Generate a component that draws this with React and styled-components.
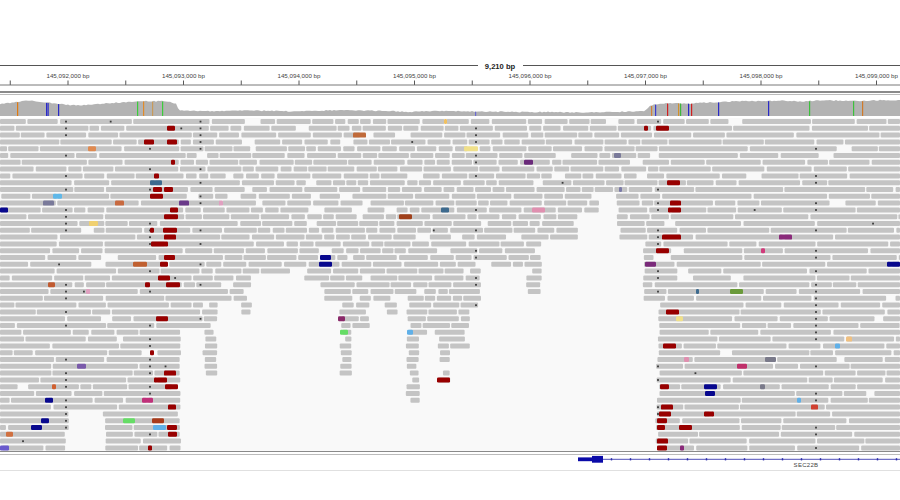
import React, { useMemo } from 'react';
import styled, { createGlobalStyle } from 'styled-components';

const W = 900;

const GlobalStyle = createGlobalStyle`
  html, body { margin: 0; padding: 0; background: #ffffff; }
  body { font-family: "Liberation Sans", Arial, sans-serif; }
`;

const Frame = styled.div`
  width: 900px;
  height: 500px;
  overflow: hidden;
  background: #ffffff;
  display: flex;
  flex-direction: column;
`;

const TopBlank = styled.div`
  flex: none;
  height: 58px;
`;

const TrackSvg = styled.svg`
  display: block;
  flex: none;
  width: 900px;
  height: ${(p) => p.$h}px;
  background: ${(p) => p.$bg || 'transparent'};
`;

const Divider = styled.div`
  flex: none;
  height: 4px;
  box-sizing: border-box;
  border-top: ${(p) => p.$top}px solid #8a8a8a;
  border-bottom: 1px solid #bbbbbb;
`;

const BottomRule = styled.div`
  flex: none;
  height: 1px;
  background: #e0e0e0;
`;

const SpanLabel = styled.text`
  font-family: "Liberation Sans", Arial, sans-serif;
  font-size: 7.6px;
  font-weight: 700;
  fill: #222;
`;

const TickLabel = styled.text`
  font-family: "Liberation Sans", Arial, sans-serif;
  font-size: 6.2px;
  fill: #444;
`;

const GeneLabel = styled.text`
  font-family: "Liberation Sans", Arial, sans-serif;
  font-size: 6px;
  letter-spacing: 0.3px;
  fill: #444;
`;

/* ---------- deterministic random ---------- */
function mulberry32(a) {
  return function () {
    a |= 0;
    a = (a + 0x6d2b79f5) | 0;
    let t = Math.imul(a ^ (a >>> 15), 1 | a);
    t = (t + Math.imul(t ^ (t >>> 7), 61 | t)) ^ t;
    return ((t ^ (t >>> 14)) >>> 0) / 4294967296;
  };
}

/* ---------- ruler ---------- */
const MAJOR0 = 68;
const STEP = 115.5;

function Ruler() {
  const majors = Array.from({ length: 8 }, (_, k) => MAJOR0 + STEP * k);
  const minors = Array.from({ length: 8 }, (_, k) => MAJOR0 - STEP / 2 + STEP * k);
  return (
    <TrackSvg $h={33} viewBox="0 0 900 33">
      <line x1="0" y1="7.5" x2="478" y2="7.5" stroke="#555" strokeWidth="1" />
      <line x1="523" y1="7.5" x2="900" y2="7.5" stroke="#555" strokeWidth="1" />
      <SpanLabel x="500" y="10.6" textAnchor="middle">9,210 bp</SpanLabel>
      {majors.map((x, k) => (
        <g key={'M' + k}>
          <TickLabel x={x} y="20.4" textAnchor="middle">
            {`145,0${92 + k},000 bp`}
          </TickLabel>
          <line x1={x} y1="22.5" x2={x} y2="27" stroke="#444" strokeWidth="0.9" />
        </g>
      ))}
      {minors.map((x, k) => (
        <line key={'m' + k} x1={x} y1="22.5" x2={x} y2="27" stroke="#444" strokeWidth="0.9" />
      ))}
      <line x1="0" y1="27" x2="900" y2="27" stroke="#6a6a6a" strokeWidth="0.9" />
    </TrackSvg>
  );
}

/* ---------- coverage ---------- */
const COV_PTS = [
  [0, 104], [10, 103], [20, 101.5], [30, 100.5], [40, 102], [50, 103], [60, 104],
  [70, 105], [80, 105.5], [90, 104.5], [100, 104], [110, 103], [120, 102.5], [130, 102],
  [140, 101], [150, 101.5], [160, 101], [170, 102], [176, 104], [179, 110], [190, 111],
  [220, 111], [250, 110.5], [280, 111], [300, 111.5], [330, 110.3], [360, 110.5],
  [390, 111], [410, 112], [430, 111], [460, 111.2], [490, 111.6], [520, 112], [550, 112],
  [580, 112.5], [610, 112], [630, 111.5], [644, 111], [650, 106], [656, 104], [670, 103],
  [690, 103.5], [700, 103], [720, 102], [740, 101.2], [760, 101], [780, 100.6],
  [800, 101.5], [820, 100.3], [840, 100.6], [860, 101], [880, 100.2], [900, 100],
];

function covTop(x) {
  for (let i = 0; i < COV_PTS.length - 1; i++) {
    const [x0, y0] = COV_PTS[i];
    const [x1, y1] = COV_PTS[i + 1];
    if (x >= x0 && x <= x1) return y0 + ((y1 - y0) * (x - x0)) / (x1 - x0);
  }
  return 101;
}

const COV_BARS = [
  [17, '#e07a10'], [46, '#2a2ac8'], [47.5, '#2a2ac8'], [58, '#2a2ac8'], [137, '#3ccc3c'],
  [143, '#e08a2a'], [152, '#c89a5a'], [162, '#3ccc3c'], [651, '#d0803a'], [655, '#3a3ad0'],
  [667, '#d02020'], [678, '#d0902a'], [680, '#3cb83c'], [688, '#2a2ac8'], [691, '#d02020'],
  [718, '#2a2ac8'], [768, '#2a2ac8'], [809, '#3cc03c'], [853, '#3cc03c'], [862, '#d07a2a'],
  [475, '#6a6ad0'],
];

const COV_Y0 = 95;
const COV_BOTTOM = 21;

function Coverage() {
  const d = useMemo(() => {
    const rnd = mulberry32(17);
    let p = `M0 ${COV_BOTTOM}`;
    for (let x = 0; x <= W; x += 2) {
      const y = covTop(x) - COV_Y0 + (rnd() - 0.5) * 1.0;
      p += ` L${x} ${y.toFixed(2)}`;
    }
    p += ` L${W} ${COV_BOTTOM} Z`;
    return p;
  }, []);
  return (
    <TrackSvg $h={23} viewBox="0 0 900 23">
      <path d={d} fill="#b3b3b3" />
      {COV_BARS.map(([x, c], i) => (
        <rect key={i} x={x} y={covTop(x) - COV_Y0 + 0.3} width="1.2" height={COV_BOTTOM - (covTop(x) - COV_Y0) - 0.3} fill={c} />
      ))}
    </TrackSvg>
  );
}

/* ---------- alignments ---------- */
const PITCH = 6.8;
const READ_H = 5;
const ROWS = 49;
const rowTop = (r) => 1 + PITCH * r;

const DEPTH = [
  [0, 66, 451], [66, 70, 430], [70, 102, 413], [102, 181, 451], [181, 201, 333],
  [201, 218, 377], [218, 238, 306], [238, 252, 319], [252, 300, 274], [300, 320, 282],
  [320, 338, 306], [338, 352, 382], [352, 370, 334], [370, 383, 301], [383, 398, 321],
  [398, 405, 300], [405, 420, 403], [420, 436, 341], [436, 451, 383], [451, 470, 353],
  [470, 481, 311], [481, 525, 271], [525, 542, 296], [542, 578, 246], [578, 600, 216],
  [600, 615, 196], [615, 641, 246], [641, 655, 301], [655, 901, 451],
];

function maxRow(x) {
  let yb = 451;
  for (const [a, b, y] of DEPTH) {
    if (x >= a && x < b) { yb = y; break; }
  }
  return Math.floor((yb - 119 - READ_H) / PITCH + 0.001);
}

function fits(x1, x2, r) {
  const a = Math.max(0, x1);
  const b = Math.min(899, x2);
  for (let x = a; x <= b; x += 2) if (maxRow(x) < r) return false;
  return maxRow(b) >= r;
}

function buildReads() {
  const rnd = mulberry32(20240611);
  const rows = [];
  for (let r = 0; r < ROWS; r++) {
    const list = [];
    let x = -rnd() * 50;
    let guard = 0;
    while (x < W && guard++ < 3000) {
      const xc = Math.max(0, Math.min(899, x + 3));
      if (maxRow(xc) < r) { x += 2; continue; }
      const dense = maxRow(xc) >= 44;
      let L = dense ? 18 + rnd() * 72 : 9 + rnd() * 26;
      if (!fits(x, x + L, r)) {
        // shrink to fit the local column
        while (L > 6 && !fits(x, x + L, r)) L -= 1.5;
        if (L <= 6 || rnd() < 0.12) { x += 3 + rnd() * 4; continue; }
      }
      list.push([x, L]);
      x += L + 1 + rnd() * 1.6;
      if (rnd() < (dense ? 0.05 : 0.1)) x += 3 + rnd() * 12;
    }
    rows.push(list);
  }
  return rows;
}

const R = '#980000';
const B = '#08088e';
const rowOf = (yc) => Math.max(0, Math.min(ROWS - 1, Math.round((yc - 121.5) / PITCH)));

const COLORED = [
  // left red cluster
  [167, 175, 129, R], [144, 154, 143, R], [167, 177, 143, R], [171, 175, 163, R],
  [154, 159, 176, R], [150, 162, 184, '#3d6a8e'], [153, 162, 190, R], [164, 173, 190, R],
  [150, 163, 197, R], [170, 178, 210, R], [164, 178, 217, R], [150, 154, 230, R],
  [163, 177, 230, R], [164, 176, 237, R], [151, 168, 244, R], [164, 175, 258, R],
  [160, 168, 264, R], [133, 147, 265, '#c06030'], [158, 170, 278, R], [166, 180, 285, R],
  [145, 150, 285, R], [156, 168, 319, R], [150, 154, 352, R], [164, 176, 372, R],
  [154, 167, 381, R], [165, 178, 386, R], [142, 153, 399, '#c0307a'], [168, 176, 406, R],
  [123, 135, 419, '#66dd66'], [152, 164, 419, '#a83a1a'], [167, 177, 426, R],
  [153, 166, 426, '#60b0e8'], [168, 177, 432, R], [148, 152, 446, R],
  // left misc
  [88, 96, 150, '#e08a50'], [53, 62, 197, '#60b8e8'], [43, 54, 204, '#7a7a9a'],
  [115, 124, 204, '#c86a40'], [179, 189, 204, '#6a3a8a'], [0, 8, 210, B],
  [89, 98, 224, '#f0d070'], [48, 55, 285, '#c05a30'], [86, 90, 291, '#e0a0c0'],
  [77, 86, 366, '#7a5aaa'], [52, 56, 386, '#d06030'], [45, 53, 399, B],
  [41, 49, 419, B], [31, 42, 426, B], [6, 13, 432, '#d07040'], [0, 9, 448, '#6a5acd'],
  // middle
  [353, 366, 136, '#c06a3a'], [444, 447, 122, '#f0c060'], [464, 478, 150, '#f0e08a'],
  [524, 533, 163, '#6a2a7a'], [441, 449, 211, '#3d6a8e'], [399, 412, 217, '#a0401a'],
  [532, 545, 211, '#e090b0'], [320, 331, 258, B], [319, 332, 265, B],
  [338, 345, 319, '#8a2a6a'], [340, 348, 332, '#66dd66'], [407, 413, 332, '#60b0e8'],
  [437, 450, 379, R], [219, 223, 204, '#e0a0c0'],
  // right cluster
  [644, 648, 129, R], [656, 669, 129, R], [614, 621, 156, '#7a7a9a'], [667, 680, 183, R],
  [619, 622, 190, '#7a7aa8'], [670, 681, 203, R], [668, 681, 210, R], [662, 681, 237, R],
  [779, 792, 237, '#8a2a7a'], [656, 669, 251, R], [761, 765, 251, '#d03a7a'],
  [645, 656, 265, '#7a2a7a'], [887, 900, 265, B], [730, 743, 292, '#6a9a3a'],
  [696, 699, 292, '#3d6a8e'], [666, 679, 312, R], [676, 683, 318, '#f0e08a'],
  [663, 676, 345, R], [835, 840, 345, '#60b0e8'], [846, 852, 339, '#f0c080'],
  [684, 689, 358, '#e090b0'], [765, 776, 358, '#7a7a8a'], [737, 747, 365, '#c0306a'],
  [660, 669, 386, R], [704, 717, 386, B], [760, 765, 386, '#7a7a8a'], [705, 715, 392, B],
  [797, 801, 399, '#60b0e8'], [661, 673, 406, R], [811, 818, 406, '#d04030'],
  [659, 671, 412, R], [704, 714, 412, R], [657, 667, 419, R], [679, 692, 426, R],
  [657, 665, 426, R], [657, 668, 439, R], [657, 667, 446, R], [680, 684, 446, '#8a2a7a'],
];

const SPECK_COLS = [66, 150, 200.5, 476, 658, 816];

function Alignments() {
  const { rows, specks } = useMemo(() => {
    const rows = buildReads();
    const rnd = mulberry32(99);
    const specks = [];
    rows.forEach((list, r) => {
      SPECK_COLS.forEach((cx) => {
        const hit = list.some(([x, L]) => cx > x + 1 && cx < x + L - 1);
        if (hit && rnd() < 0.55) specks.push([cx, r]);
      });
      if (rnd() < 0.3) {
        const cx = 20 + rnd() * 860;
        const hit = list.some(([x, L]) => cx > x + 1 && cx < x + L - 1);
        if (hit) specks.push([cx, r]);
      }
    });
    return { rows, specks };
  }, []);

  return (
    <TrackSvg $h={333} $bg="#f9f9f9" viewBox="0 0 900 333">
      {rows.map((list, r) =>
        list.map(([x, L], i) => {
          const x1 = Math.max(0, x);
          const x2 = Math.min(W, x + L);
          if (x2 - x1 < 1) return null;
          return (
            <rect key={r + '-' + i} x={x1} y={rowTop(r)} width={x2 - x1} height={READ_H} rx="1" fill="#c4c4c4" />
          );
        })
      )}
      {specks.map(([x, r], i) => (
        <rect key={'s' + i} x={x - 0.9} y={rowTop(r) + 1.7} width="1.8" height="1.8" fill="#3a3a3a" />
      ))}
      {COLORED.map(([a, b, yc, c], i) => (
        <rect key={'c' + i} x={a} y={rowTop(rowOf(yc))} width={b - a} height={READ_H} rx="1.2" fill={c} />
      ))}
    </TrackSvg>
  );
}

/* ---------- gene track ---------- */
function GeneTrack() {
  const arrows = [];
  for (let x = 611.5; x < W; x += 19) arrows.push(x);
  return (
    <TrackSvg $h={15} viewBox="0 0 900 15">
      <line x1="578" y1="4.3" x2="900" y2="4.3" stroke="#3a3ab0" strokeWidth="0.9" />
      <rect x="578" y="2.4" width="15" height="3.8" fill="#0a0aa8" />
      <rect x="592" y="0.9" width="11" height="6.8" fill="#0a0aa8" />
      {arrows.map((x, i) => (
        <rect key={i} x={x - 0.7} y="3.2" width="1.4" height="2.2" fill="#2a2aa8" />
      ))}
      <GeneLabel x="806" y="11.7" textAnchor="middle">SEC22B</GeneLabel>
    </TrackSvg>
  );
}

export default function App() {
  return (
    <>
      <GlobalStyle />
      <Frame>
        <TopBlank />
        <Ruler />
        <Divider $top={2} />
        <Coverage />
        <Alignments />
        <Divider $top={1} />
        <GeneTrack />
        <BottomRule />
      </Frame>
    </>
  );
}
